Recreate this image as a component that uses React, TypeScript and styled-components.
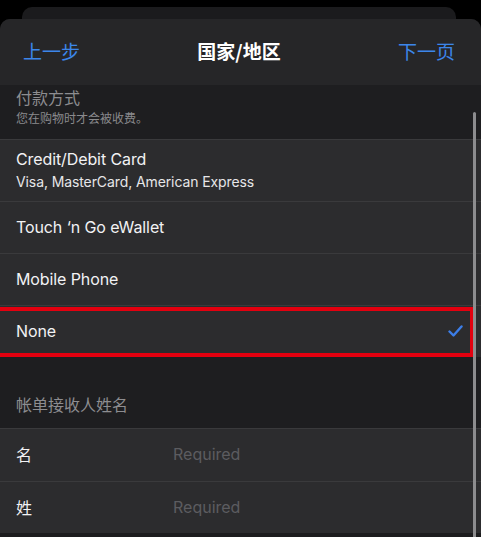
import React from "react";
import styled, { createGlobalStyle } from "styled-components";

const Global = createGlobalStyle`
  html, body { margin: 0; padding: 0; background: #000; }
  body { font-family: Inter, "Noto Sans CJK SC", sans-serif; -webkit-font-smoothing: antialiased; }
  #root { width: 481px; height: 537px; overflow: hidden; }
`;

const Screen = styled.div`
  width: 481px;
  height: 537px;
  background: #000;
  padding-top: 7px;
  box-sizing: border-box;
  display: flex;
  flex-direction: column;
  overflow: hidden;
  position: relative;
`;

const BackCard = styled.div`
  margin: 0 25px 0 22px;
  height: 24px;
  background: #1b1b1d;
  border-radius: 10px 10px 0 0;
  margin-bottom: -12px;
`;

const Sheet = styled.div`
  flex: 1;
  background: #1c1c1e;
  border-radius: 10px 10px 0 0;
  display: flex;
  flex-direction: column;
  overflow: hidden;
  position: relative;
`;

const NavBar = styled.div`
  height: 66px;
  background: #262628;
  display: grid;
  grid-template-columns: 1fr auto 1fr;
  align-items: center;
  padding: 0 26px 0 23px;
  font-family: "Noto Sans CJK SC", sans-serif;
`;

const NavButton = styled.span<{ $align: "left" | "right" }>`
  color: #3c86ea;
  font-size: 19px;
  text-align: ${(p) => p.$align};
  padding-bottom: 4px;
`;

const NavTitle = styled.span`
  color: #fff;
  font-size: 19px;
  font-weight: 700;
  padding-bottom: 4px;
`;

const SectionHeader = styled.div<{ $height: number; $pb: number }>`
  height: ${(p) => p.$height}px;
  box-sizing: border-box;
  padding: 0 16px ${(p) => p.$pb}px;
  display: flex;
  flex-direction: column;
  justify-content: flex-end;
  font-family: "Noto Sans CJK SC", sans-serif;
  background: #1e1e20;
`;

const HeaderTitle = styled.div`
  color: #8d8d90;
  font-size: 16px;
  line-height: 22px;
`;

const HeaderSub = styled.div`
  color: #8a8a8d;
  font-size: 12px;
  line-height: 18px;
  margin-top: 1px;
`;

const Group = styled.div`
  background: #2c2c2e;
  border-top: 1px solid #3a3a3c;
`;

const Row = styled.div<{ $height?: number }>`
  position: relative;
  height: ${(p) => p.$height ?? 52}px;
  display: flex;
  align-items: center;
  padding-left: 16px;
  padding-right: 18px;
  padding-bottom: 2px;
  box-sizing: border-box;
  & + & {
    border-top: 1px solid #3a3a3c;
  }
`;

const RowText = styled.div`
  flex: 1;
  display: flex;
  flex-direction: column;
`;

const RowTitle = styled.span`
  color: #f2f2f4;
  font-size: 16px;
  line-height: 20px;
  letter-spacing: -0.1px;
`;

const RowSub = styled.span`
  color: #e6e6e8;
  font-size: 14px;
  line-height: 18px;
  margin-top: 4px;
  letter-spacing: -0.1px;
`;

const FieldLabel = styled.span`
  width: 157px;
  color: #f2f2f4;
  font-size: 16px;
  font-family: "Noto Sans CJK SC", sans-serif;
`;

const FieldInput = styled.span`
  color: #5c5c60;
  font-size: 16px;
`;

const Highlight = styled.div`
  position: absolute;
  left: -4px;
  right: 7px;
  top: 1px;
  bottom: 0;
  border: 4px solid #e3000f;
  pointer-events: none;
`;

const Scrollbar = styled.div`
  position: absolute;
  right: 5px;
  top: 93px;
  bottom: 0;
  width: 3px;
  background: #8c8c8e;
  border-radius: 2px 2px 0 0;
`;

const Check = () => (
  <svg width="15" height="12" viewBox="0 0 15 12">
    <polyline
      points="1.5,6.5 5.5,10.5 13.5,1.5"
      fill="none"
      stroke="#3c7ee8"
      strokeWidth="2.4"
      strokeLinecap="round"
      strokeLinejoin="round"
    />
  </svg>
);

export default function App() {
  return (
    <Screen>
      <Global />
      <BackCard />
      <Sheet>
        <NavBar>
          <NavButton $align="left">上一步</NavButton>
          <NavTitle>国家/地区</NavTitle>
          <NavButton $align="right">下一页</NavButton>
        </NavBar>
        <SectionHeader $height={54} $pb={12}>
          <HeaderTitle>付款方式</HeaderTitle>
          <HeaderSub>您在购物时才会被收费。</HeaderSub>
        </SectionHeader>
        <Group>
          <Row $height={61}>
            <RowText>
              <RowTitle>Credit/Debit Card</RowTitle>
              <RowSub>Visa, MasterCard, American Express</RowSub>
            </RowText>
          </Row>
          <Row>
            <RowText>
              <RowTitle>Touch ‘n Go eWallet</RowTitle>
            </RowText>
          </Row>
          <Row>
            <RowText>
              <RowTitle>Mobile Phone</RowTitle>
            </RowText>
          </Row>
          <Row>
            <RowText>
              <RowTitle>None</RowTitle>
            </RowText>
            <Check />
            <Highlight />
          </Row>
        </Group>
        <SectionHeader $height={71} $pb={13}>
          <HeaderTitle>帐单接收人姓名</HeaderTitle>
        </SectionHeader>
        <Group>
          <Row>
            <FieldLabel>名</FieldLabel>
            <FieldInput>Required</FieldInput>
          </Row>
          <Row>
            <FieldLabel>姓</FieldLabel>
            <FieldInput>Required</FieldInput>
          </Row>
        </Group>
        <Scrollbar />
      </Sheet>
    </Screen>
  );
}
